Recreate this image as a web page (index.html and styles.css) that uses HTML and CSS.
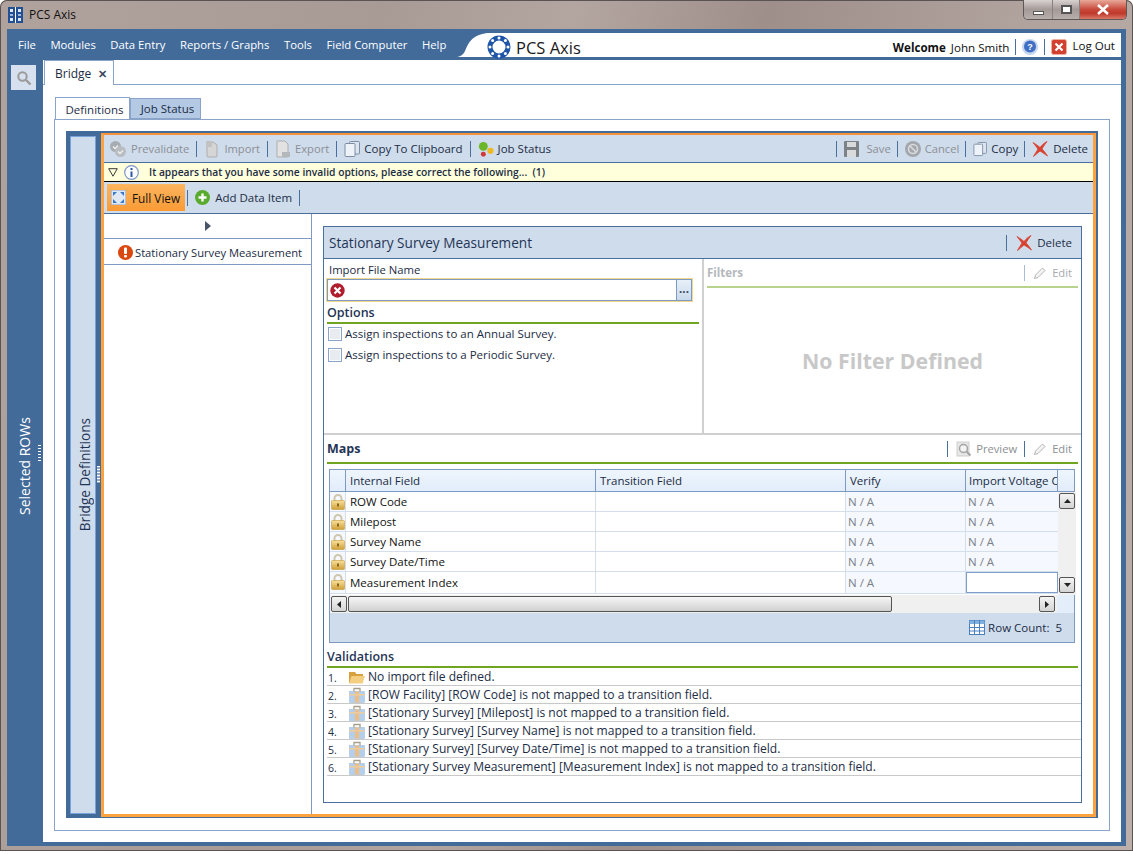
FILE: index.html
```html
<!DOCTYPE html>
<html lang="en">
<head>
  <meta charset="UTF-8">
  <title>PCS Axis</title>
  <link rel="stylesheet" href="styles.css">
</head>
<body>
  <!-- shared icons -->
  <svg class="defs" width="0" height="0">
    <defs>
      <linearGradient id="goldGrad" x1="0" y1="0" x2="0" y2="1"><stop offset="0" stop-color="#f8e09a"/><stop offset="1" stop-color="#d0a038"/></linearGradient>
      <symbol id="lock" viewBox="0 0 14 16">
        <path d="M3.500 7V4.500a3.500 3.500 0 0 1 7 0V7" fill="none" stroke="#cfc6ae" stroke-width="2"/>
        <rect x="0.500" y="6.500" width="13" height="9" rx="1" fill="url(#goldGrad)" stroke="#c49a3a" stroke-width=".6"/>
        <rect x="6" y="9.500" width="2" height="3" fill="#8a6a1e"/>
      </symbol>
      <symbol id="box" viewBox="0 0 16 16">
        <rect x="0.500" y="4.500" width="15" height="11" fill="#b4cfec" stroke="#a4c0de" stroke-width=".6"/>
        <rect x="6" y="4.500" width="4" height="11" fill="#eebd84"/>
        <rect x="0.500" y="7" width="15" height="1.500" fill="#f1cb9a"/>
        <path d="M5 4.500V1.500h6v3" fill="none" stroke="#a89e8c" stroke-width="1.300"/>
      </symbol>
      <symbol id="copy" viewBox="0 0 16 16">
        <rect x="5.500" y="0.500" width="10" height="12.500" rx="1" fill="#dbe4ef" stroke="#7d8ea3"/>
        <rect x="1" y="2.500" width="10" height="13" rx="1" fill="#eef3f9" stroke="#7d8ea3"/>
      </symbol>
      <symbol id="redx" viewBox="0 0 16 16">
        <path d="M1 1.500C5 4 7 5.500 8 6.500 10 4 12 2 15 .5 12.500 4 11 6 10 8c2 2 4 4.500 5.500 7C12.500 13 10 11 8 10c-2 1.500-4 3.500-6.500 5.500C3 12.500 5 10 6 8 4.500 6 3 4 1 1.500z" fill="#d8412f" stroke="#d8412f" stroke-width=".8"/>
      </symbol>
      <symbol id="pencil" viewBox="0 0 14 14">
        <path d="M1.500 12.500l1-3.500 7-7 2.500 2.500-7 7z" fill="#f4f4f4" stroke="#b4b4b4"/>
      </symbol>
    </defs>
  </svg>

  <div class="window">
    <!-- title bar -->
    <div class="titlebar">
      <svg class="app-icon" width="15" height="16" viewBox="0 0 15 16">
        <rect width="15" height="16" fill="#234f94"/>
        <rect x="7" width="1" height="16" fill="#fff"/>
        <rect x="2" y="2" width="3" height="3" fill="#dfe8f5"/>
        <rect x="10" y="2" width="3" height="3" fill="#dfe8f5"/>
        <rect x="2" y="7" width="3" height="2" fill="#9fb8dc"/>
        <rect x="10" y="7" width="3" height="2" fill="#9fb8dc"/>
        <rect x="2" y="11" width="3" height="3" fill="#dfe8f5"/>
        <rect x="10" y="11" width="3" height="3" fill="#dfe8f5"/>
      </svg>
      <span class="window-title">PCS Axis</span>
      <div class="win-controls">
        <div class="win-btn win-min"><span></span></div>
        <div class="win-btn win-max"><span></span></div>
        <div class="win-btn win-close">
          <svg width="14" height="11" viewBox="0 0 14 11"><path d="M2 1l10 9M12 1L2 10" stroke="#fff" stroke-width="2.600"/></svg>
        </div>
      </div>
    </div>

    <div class="app">
      <!-- menu and welcome line -->
      <header class="app-header">
        <nav class="menu">
          <a>File</a><a>Modules</a><a>Data Entry</a><a>Reports / Graphs</a><a>Tools</a><a>Field Computer</a><a>Help</a>
        </nav>
        <svg class="menu-curve" width="32" height="24" viewBox="0 0 32 24"><path d="M0 0h32C18 2 14 8 10 18 8 22 5 24 0 24z" fill="#426b9a"/></svg>
        <div class="brand">
          <svg width="24" height="24" viewBox="0 0 24 24">
            <circle cx="12" cy="12" r="9" fill="none" stroke="#1f55a8" stroke-width="5"/>
            <g fill="#fff">
              <circle cx="12" cy="3" r="1.500"/><circle cx="12" cy="21" r="1.500"/><circle cx="3" cy="12" r="1.500"/><circle cx="21" cy="12" r="1.500"/>
              <circle cx="5.600" cy="5.600" r="1.500"/><circle cx="18.400" cy="5.600" r="1.500"/><circle cx="5.600" cy="18.400" r="1.500"/><circle cx="18.400" cy="18.400" r="1.500"/>
            </g>
          </svg>
          <span>PCS Axis</span>
        </div>
        <div class="user">
          <b>Welcome</b><span class="user-name">John Smith</span><i class="sep"></i>
          <svg width="16" height="16" viewBox="0 0 16 16"><circle cx="8" cy="8" r="8" fill="#c5d6ee"/><circle cx="8" cy="7.500" r="6" fill="#3f6fc4"/><text x="8" y="11" font-size="9" font-weight="700" text-anchor="middle" fill="#fff" font-family="Liberation Sans">?</text></svg>
          <i class="sep"></i>
          <svg width="16" height="16" viewBox="0 0 16 16"><rect x=".5" y=".5" width="15" height="15" rx="2" fill="#d2402f" stroke="#f0b0a0"/><path d="M4.500 4.500l7 7M11.500 4.500l-7 7" stroke="#fff" stroke-width="2.200"/></svg>
          <span class="logout">Log Out</span>
        </div>
      </header>

      <div class="body">
        <!-- selected ROWs side bar -->
        <aside class="sidebar">
          <div class="search-btn">
            <svg width="16" height="16" viewBox="0 0 16 16"><circle cx="6.500" cy="6.500" r="4.200" fill="none" stroke="#9a9a9a" stroke-width="2"/><path d="M10 10l4.500 4.500" stroke="#9a9a9a" stroke-width="2.400"/></svg>
          </div>
          <div class="sidebar-label"><span>Selected ROWs</span></div>
          <i class="grip"></i>
        </aside>

        <main class="content">
          <div class="doc-tabs">
            <div class="doc-tab">Bridge<span class="doc-close">&#10005;</span></div>
          </div>

          <div class="tab-page">
            <div class="sub-tabs">
              <div class="sub-tab active">Definitions</div>
              <div class="sub-tab">Job Status</div>
            </div>

            <div class="sub-page">
              <div class="outer">
                <div class="strip"><span>Bridge Definitions</span><i class="grip dark"></i></div>

                <div class="pane">
                  <!-- main toolbar -->
                  <div class="toolbar">
                    <div class="tool off">
                      <svg width="18" height="18" viewBox="0 0 18 18"><circle cx="6.500" cy="6.500" r="5.500" fill="#a8adb3"/><circle cx="11.500" cy="11.500" r="5.500" fill="#b9bdc2"/><path d="M4 6.500l2 2 3-3M9 11.500l2 2 3-3" fill="none" stroke="#eee" stroke-width="1.400"/></svg>
                      Prevalidate
                    </div>
                    <i class="sep"></i>
                    <div class="tool off">
                      <svg width="16" height="18" viewBox="0 0 16 18"><path d="M3 2h6l4 3v11a1 1 0 0 1-1 1H4a1 1 0 0 1-1-1z" fill="#d6d6d6" stroke="#adadad"/><path d="M2 1l6 0 0 6-6 0z" fill="#c2c2c2"/></svg>
                      Import
                    </div>
                    <i class="sep"></i>
                    <div class="tool off">
                      <svg width="16" height="18" viewBox="0 0 16 18"><path d="M2 1h8l3 3v13H2z" fill="#e2e2e2" stroke="#adadad"/><path d="M7 12h8v5H7z" fill="#b4b8bd"/></svg>
                      Export
                    </div>
                    <i class="sep"></i>
                    <div class="tool">
                      <svg width="16" height="16"><use href="#copy"/></svg>
                      Copy To Clipboard
                    </div>
                    <i class="sep"></i>
                    <div class="tool">
                      <svg width="16" height="18" viewBox="0 0 18 18"><circle cx="6" cy="6" r="5" fill="#6cb62a"/><circle cx="14" cy="11" r="3.500" fill="#f0b820"/><circle cx="6" cy="15" r="2.800" fill="#d23a3a"/></svg>
                      Job Status
                    </div>
                    <div class="spacer"></div>
                    <i class="sep"></i>
                    <div class="tool off save">
                      <svg width="15" height="16" viewBox="0 0 15 16"><rect width="15" height="16" rx="1" fill="#7d8288"/><rect x="3" y="1" width="9" height="5" fill="#d8dadc"/><rect x="3" y="9" width="9" height="7" fill="#d8dadc"/></svg>
                      Save
                    </div>
                    <i class="sep"></i>
                    <div class="tool off">
                      <svg width="16" height="16" viewBox="0 0 16 16"><circle cx="8" cy="8" r="8" fill="#a2a7ad"/><circle cx="8" cy="8" r="4.500" fill="none" stroke="#d8dadc" stroke-width="1.600"/><path d="M5 5l6 6" stroke="#d8dadc" stroke-width="1.600"/></svg>
                      Cancel
                    </div>
                    <i class="sep"></i>
                    <div class="tool">
                      <svg width="14" height="16"><use href="#copy"/></svg>
                      Copy
                    </div>
                    <i class="sep"></i>
                    <div class="tool">
                      <svg width="16" height="16"><use href="#redx"/></svg>
                      <span class="tool-gap">Delete</span>
                    </div>
                  </div>

                  <!-- invalid options message -->
                  <div class="alert">
                    <svg width="10" height="9" viewBox="0 0 10 9"><path d="M.7.700h8.600L5 8.200z" fill="none" stroke="#3a3a3a"/></svg>
                    <svg width="15" height="15" viewBox="0 0 15 15"><circle cx="7.500" cy="7.500" r="6.800" fill="#fff" stroke="#7c96c8" stroke-width="1.200"/><rect x="6.500" y="6.500" width="2" height="5.500" fill="#2c58a8"/><rect x="6.500" y="3" width="2" height="2" fill="#2c58a8"/></svg>
                    <span>It appears that you have some invalid options, please correct the following...&nbsp; (1)</span>
                  </div>

                  <div class="view-bar">
                    <div class="full-view">
                      <svg width="15" height="15" viewBox="0 0 15 15"><rect width="15" height="15" fill="#dfe8f3" stroke="#8aa3c8"/><path d="M2 2l4 0-4 4zM13 2l0 4-4-4zM2 13l0-4 4 4zM13 13l-4 0 4-4z" fill="#3a79c8"/></svg>
                      Full View
                    </div>
                    <i class="sep"></i>
                    <div class="tool">
                      <svg width="15" height="15" viewBox="0 0 15 15"><circle cx="7.500" cy="7.500" r="7.500" fill="#58ab2c"/><path d="M7.500 3.500v8M3.500 7.500h8" stroke="#fff" stroke-width="2.400"/></svg>
                      <span class="tool-gap">Add Data Item</span>
                    </div>
                    <i class="sep"></i>
                  </div>

                  <div class="work">
                    <!-- data item list -->
                    <div class="item-list">
                      <div class="collapse-row"><svg width="6" height="10" viewBox="0 0 6 10"><path d="M0 0l6 5-6 5z" fill="#4a5468"/></svg></div>
                      <div class="item-row">
                        <svg width="15" height="15" viewBox="0 0 15 15"><circle cx="7.500" cy="7.500" r="7.500" fill="#d9480f"/><rect x="6" y="2.500" width="3" height="6.500" rx="1" fill="#fff"/><rect x="6" y="10" width="3" height="2.500" rx="1" fill="#fff"/></svg>
                        Stationary Survey Measurement
                      </div>
                    </div>

                    <div class="detail">
                      <section class="panel">
                        <div class="panel-head">
                          <span class="panel-title">Stationary Survey Measurement</span>
                          <i class="sep"></i>
                          <div class="tool">
                            <svg width="16" height="16"><use href="#redx"/></svg>
                            <span class="tool-gap">Delete</span>
                          </div>
                        </div>

                        <div class="panel-top">
                          <div class="import-col">
                            <div class="field-label">Import File Name</div>
                            <div class="file-input">
                              <svg width="15" height="15" viewBox="0 0 15 15"><circle cx="7.500" cy="7.500" r="7.200" fill="#b01e2e"/><path d="M4.500 4.500l6 6M10.500 4.500l-6 6" stroke="#fff" stroke-width="2.200"/></svg>
                              <span class="file-btn">...</span>
                            </div>
                            <h3 class="section-title">Options</h3>
                            <label class="check"><i class="box"></i>Assign inspections to an Annual Survey.</label>
                            <label class="check"><i class="box"></i>Assign inspections to a Periodic Survey.</label>
                          </div>
                          <div class="filter-col">
                            <div class="filter-head">
                              <span>Filters</span>
                              <div class="spacer"></div>
                              <i class="sep light"></i>
                              <div class="tool off">
                                <svg width="14" height="14"><use href="#pencil"/></svg>
                                Edit
                              </div>
                            </div>
                            <div class="no-filter">No Filter Defined</div>
                          </div>
                        </div>

                        <div class="maps-head">
                          <span>Maps</span>
                          <div class="spacer"></div>
                          <i class="sep"></i>
                          <div class="tool off">
                            <svg width="16" height="16" viewBox="0 0 16 16"><rect x="1" y="1" width="12" height="14" fill="#e6e6e6" stroke="#cfcfcf"/><circle cx="7.500" cy="7.500" r="4" fill="#f4f4f4" stroke="#a4a4a4" stroke-width="1.500"/><path d="M10.500 10.500l4 4" stroke="#a4a4a4" stroke-width="2"/></svg>
                            Preview
                          </div>
                          <i class="sep"></i>
                          <div class="tool off">
                            <svg width="14" height="14"><use href="#pencil"/></svg>
                            Edit
                          </div>
                        </div>

                        <!-- maps grid -->
                        <div class="grid">
                          <div class="grid-head">
                            <div></div><div>Internal Field</div><div>Transition Field</div><div>Verify</div><div class="clip">Import Voltage C</div><div></div>
                          </div>
                          <div class="grid-body">
                            <div class="rows">
                              <div class="row"><div class="lock"><svg width="14" height="16"><use href="#lock"/></svg></div><div>ROW Code</div><div></div><div class="na">N / A</div><div class="na">N / A</div></div>
                              <div class="row"><div class="lock"><svg width="14" height="16"><use href="#lock"/></svg></div><div>Milepost</div><div></div><div class="na">N / A</div><div class="na">N / A</div></div>
                              <div class="row"><div class="lock"><svg width="14" height="16"><use href="#lock"/></svg></div><div>Survey Name</div><div></div><div class="na">N / A</div><div class="na">N / A</div></div>
                              <div class="row"><div class="lock"><svg width="14" height="16"><use href="#lock"/></svg></div><div>Survey Date/Time</div><div></div><div class="na">N / A</div><div class="na">N / A</div></div>
                              <div class="row last"><div class="lock"><svg width="14" height="16"><use href="#lock"/></svg></div><div>Measurement Index</div><div></div><div class="na">N / A</div><div class="editing"></div></div>
                            </div>
                            <div class="vscroll">
                              <div class="sb-btn"><svg width="7" height="4" viewBox="0 0 7 4"><path d="M0 4l3.500-4 3.500 4z" fill="#222"/></svg></div>
                              <div class="sb-btn"><svg width="7" height="4" viewBox="0 0 7 4"><path d="M0 0l3.500 4 3.500-4z" fill="#222"/></svg></div>
                            </div>
                          </div>
                          <div class="hscroll">
                            <div class="sb-btn"><svg width="4" height="7" viewBox="0 0 4 7"><path d="M4 0L0 3.500 4 7z" fill="#222"/></svg></div>
                            <div class="sb-thumb"></div>
                            <div class="spacer"></div>
                            <div class="sb-btn"><svg width="4" height="7" viewBox="0 0 4 7"><path d="M0 0l4 3.500L0 7z" fill="#222"/></svg></div>
                          </div>
                          <div class="grid-foot">
                            <svg width="16" height="15" viewBox="0 0 16 15"><rect x=".5" y=".5" width="15" height="14" fill="#fff" stroke="#4a7fc0"/><rect x=".5" y=".5" width="15" height="3.500" fill="#7fb0e0"/><path d="M5.500 0v15M10.500 0v15M0 7.500h16M0 11h16" stroke="#4a7fc0"/></svg>
                            <span>Row Count:</span><span class="count">5</span>
                          </div>
                        </div>

                        <h3 class="section-title valid-title">Validations</h3>
                        <ol class="valid-list">
                          <li><span class="num">1.</span><svg width="16" height="14" viewBox="0 0 16 14"><path d="M0 2h6l1.500 2H14v9H0z" fill="#d9a03e"/><path d="M2.500 6H16l-2.500 7.500H0z" fill="#f4cf82"/></svg>No import file defined.</li>
                          <li><span class="num">2.</span><svg width="16" height="16"><use href="#box"/></svg>[ROW Facility] [ROW Code] is not mapped to a transition field.</li>
                          <li><span class="num">3.</span><svg width="16" height="16"><use href="#box"/></svg>[Stationary Survey] [Milepost] is not mapped to a transition field.</li>
                          <li><span class="num">4.</span><svg width="16" height="16"><use href="#box"/></svg>[Stationary Survey] [Survey Name] is not mapped to a transition field.</li>
                          <li><span class="num">5.</span><svg width="16" height="16"><use href="#box"/></svg>[Stationary Survey] [Survey Date/Time] is not mapped to a transition field.</li>
                          <li><span class="num">6.</span><svg width="16" height="16"><use href="#box"/></svg>[Stationary Survey Measurement] [Measurement Index] is not mapped to a transition field.</li>
                        </ol>
                      </section>
                    </div>
                  </div>
                </div>
              </div>
            </div>
          </div>
        </main>
      </div>
    </div>
  </div>
</body>
</html>
```

FILE: styles.css
```css
* {
  box-sizing: border-box;
}

body {
  margin: 0;
  width: 1133px;
  height: 854px;
  overflow: hidden;
  background: #fff;
  font-family: "Open Sans", "Noto Sans", sans-serif;
  font-size: 11.5px;
  color: #1c2c44;
}

.defs {
  display: block;
  height: 0;
}

svg {
  flex: none;
  display: block;
}

.spacer {
  flex: 1;
}

/* window frame */
.window {
  height: 851px;
  padding: 0 7px 5px 7px;
  display: flex;
  flex-direction: column;
  background: linear-gradient(100deg, #b0a29c 0%, #a89a95 30%, #b3a5a0 45%, #9e8f8a 60%, #b0a29d 80%, #bdb0ab 100%);
  border-radius: 7px 7px 0 0;
  box-shadow: inset 0 0 0 1px #5a5352;
}

.titlebar {
  height: 29px;
  flex: none;
  display: flex;
  align-items: flex-start;
  padding-top: 7px;
}

.app-icon {
  margin: 0 6px 0 1px;
}

.window-title {
  font-size: 12px;
  color: #111;
  line-height: 16px;
}

.win-controls {
  display: flex;
  margin-left: auto;
  margin-top: -7px;
  margin-right: -1px;
  height: 20px;
  border: 1px solid #5f5857;
  border-top: 0;
  border-radius: 0 0 5px 5px;
  overflow: hidden;
}

.win-btn {
  display: flex;
  align-items: center;
  justify-content: center;
  height: 100%;
  background: linear-gradient(#d8d2d0, #a49a97 50%, #b7afac);
  border-right: 1px solid #8b8280;
}

.win-min {
  width: 29px;
}

.win-min span {
  width: 11px;
  height: 4px;
  margin-top: 6px;
  background: #fff;
  border: 1px solid #555;
}

.win-max {
  width: 27px;
}

.win-max span {
  width: 11px;
  height: 9px;
  background: #fff;
  border: 2px solid #555;
  box-shadow: inset 0 0 0 1px #fff;
}

.win-close {
  width: 46px;
  border: 0;
  background: linear-gradient(#e8a99a, #c8493a 50%, #c0392b 70%, #d87868);
}

/* app chrome */
.app {
  flex: 1;
  display: flex;
  flex-direction: column;
  padding: 4px 5px 4px 4px;
  background: #426b9a;
}

.app-header {
  height: 24px;
  flex: none;
  display: flex;
  background: #fff;
  margin-bottom: 3px;
}

.menu {
  display: flex;
  align-items: center;
  gap: 14.5px;
  width: 448px;
  height: 24px;
  padding: 0 0 2px 11px;
  margin-left: -4px;
  background: #426b9a;
  color: #fff;
  font-size: 11.3px;
  white-space: nowrap;
}

.brand {
  display: flex;
  align-items: center;
  gap: 5px;
  font-size: 16.5px;
  color: #1a1a1a;
  margin-top: 2px;
  height: 24px;
}

.user {
  margin-left: auto;
  padding-right: 6px;
  display: flex;
  align-items: center;
  font-size: 11.6px;
  color: #111;
  height: 28px;
}

.user b {
  font-weight: 700;
}

.user-name {
  margin-left: 5px;
}

.user .sep {
  margin: 0 6px;
}

.logout {
  margin-left: 5px;
  margin-top: -4px;
}

.sep {
  width: 1px;
  height: 16px;
  flex: none;
  background: #4a6f9e;
}

.sep.light {
  background: #a9bcd6;
}

.body {
  flex: 1;
  display: flex;
  min-height: 0;
}

/* selected ROWs bar */
.sidebar {
  width: 32px;
  flex: none;
  display: flex;
  flex-direction: column;
  position: relative;
  background: #426b9a;
}

.search-btn {
  width: 25px;
  height: 25px;
  margin-top: 5px;
  background: #d6e0ee;
  display: flex;
  align-items: center;
  justify-content: center;
}

.sidebar-label {
  flex: 1;
  display: flex;
  align-items: center;
  justify-content: center;
  writing-mode: vertical-rl;
  transform: rotate(180deg);
  color: #fff;
  font-size: 14px;
  margin-left: 2px;
  margin-right: 8px;
}

.grip {
  display: block;
  width: 3px;
  height: 17px;
  position: absolute;
  left: 27px;
  top: 385px;
  background: repeating-linear-gradient(#fff 0 1px, transparent 1px 3px);
}

.grip.dark {
  background: repeating-linear-gradient(#fff 0 1px, #8fa8c8 1px 3px);
  left: 26px;
  top: 329px;
}

/* document tabs */
.content {
  flex: 1;
  display: flex;
  flex-direction: column;
  min-width: 0;
  background: #fff;
}

.doc-tabs {
  height: 25px;
  flex: none;
  display: flex;
  padding-left: 1px;
  border-bottom: 1px solid #8aa3c8;
}

.doc-tab {
  width: 70px;
  height: 25px;
  display: flex;
  align-items: center;
  padding-left: 10px;
  background: #fff;
  border: 1px solid #8aa3c8;
  border-bottom: 0;
  font-size: 12px;
}

.doc-close {
  margin-left: 7px;
  font-size: 11px;
  color: #3a4a60;
  font-weight: 700;
}

.tab-page {
  flex: 1;
  display: flex;
  flex-direction: column;
  padding: 12px 11px 11px 11px;
  min-height: 0;
}

.sub-tabs {
  display: flex;
  align-items: flex-end;
  height: 22px;
  flex: none;
  padding-left: 1px;
}

.sub-tab {
  width: 71px;
  height: 21px;
  display: flex;
  align-items: center;
  justify-content: center;
  padding-left: 4px;
  background: #b4cae4;
  border: 1px solid #8aa3c8;
  font-size: 11.5px;
}

.sub-tab.active {
  width: 75px;
  height: 23px;
  margin-bottom: -1px;
  background: #fff;
  border-bottom: 0;
}

.sub-page {
  flex: 1;
  display: flex;
  padding: 11px 11px 12px 11px;
  border: 1px solid #8aa3c8;
  min-height: 0;
}

.outer {
  flex: 1;
  display: flex;
  padding: 2px 2px 1px 4px;
  background: #426b9a;
  min-width: 0;
}

.strip {
  width: 26px;
  flex: none;
  margin: 3px 5px 3px 0;
  position: relative;
  display: flex;
  align-items: center;
  justify-content: center;
  background: #cfdcec;
  border: 1px solid #7ba2d8;
}

.strip span {
  writing-mode: vertical-rl;
  transform: rotate(180deg);
  font-size: 13.6px;
  color: #1f3555;
  margin-left: 2px;
}

/* orange highlighted pane */
.pane {
  flex: 1;
  min-width: 0;
  display: flex;
  flex-direction: column;
  background: #fff;
  border: 3px solid #fca33f;
  border-top: 2px solid #f7923a;
}

.toolbar {
  height: 28px;
  flex: none;
  display: flex;
  align-items: center;
  padding: 0 5px;
  background: #cfdcec;
  border-bottom: 1px solid #4a6f9e;
}

.toolbar .sep {
  margin: 0 7px;
}

.toolbar .spacer ~ .sep {
  margin: 0 7px 0 6px;
}

.tool {
  display: flex;
  align-items: center;
  gap: 4px;
  white-space: nowrap;
  font-size: 11.5px;
  font-weight: 400;
  color: #1c2c44;
}

.tool.off {
  font-size: 11.2px;
  color: #8c8f94;
}

.tool.save svg {
  margin-right: 3px;
}

.tool-gap {
  margin-left: 1px;
}

.alert {
  height: 19px;
  flex: none;
  display: flex;
  align-items: center;
  gap: 6px;
  padding-left: 4px;
  background: #ffffdc;
  border-bottom: 1px solid #000;
  font-size: 10.3px;
  font-weight: 600;
  color: #1c2c44;
}

.alert span {
  margin-left: 4px;
}

.view-bar {
  height: 32px;
  flex: none;
  display: flex;
  align-items: center;
  padding-left: 3px;
  background: #cfdcec;
  border-bottom: 1px solid #4a6f9e;
}

.view-bar .sep {
  margin: 0 7px 0 2px;
}

.view-bar .tool + .sep {
  margin-left: 7px;
}

.full-view {
  display: flex;
  align-items: center;
  gap: 6px;
  height: 27px;
  padding: 0 5px 0 4px;
  background: linear-gradient(#fdb55e, #fb9a35);
  color: #111;
  font-size: 11.8px;
  white-space: nowrap;
}

.work {
  flex: 1;
  display: flex;
  min-height: 0;
}

.item-list {
  width: 208px;
  flex: none;
  border-right: 1px solid #7f9ac0;
}

.collapse-row {
  height: 25px;
  display: flex;
  align-items: center;
  justify-content: center;
  border-bottom: 1px solid #7f9ac0;
}

.item-row {
  height: 26px;
  display: flex;
  align-items: center;
  gap: 2px;
  padding: 1px 0 0 14px;
  border-bottom: 1px solid #7f9ac0;
  font-size: 11.2px;
  white-space: nowrap;
}

.detail {
  flex: 1;
  display: flex;
  padding: 12px 11px 11px 11px;
  min-width: 0;
}

/* stationary survey panel */
.panel {
  flex: 1;
  display: flex;
  flex-direction: column;
  border: 1px solid #4a6f9e;
  min-width: 0;
}

.panel-head {
  height: 32px;
  flex: none;
  display: flex;
  align-items: center;
  padding: 0 9px 0 5px;
  background: #cfdcec;
  border-bottom: 1px solid #4a6f9e;
}

.panel-head .sep {
  margin-right: 9px;
}

.panel-title {
  flex: 1;
  font-size: 13.6px;
  color: #1f3555;
}

.panel-top {
  height: 176px;
  flex: none;
  display: flex;
  border-bottom: 2px solid #d0d0d0;
}

.import-col {
  width: 380px;
  flex: none;
  padding: 2px 3px 0 3px;
  border-right: 2px solid #d0d0d0;
}

.field-label {
  height: 18px;
  line-height: 17px;
  padding-left: 2px;
  font-size: 11.3px;
}

.file-input {
  width: 365px;
  height: 22px;
  display: flex;
  align-items: center;
  justify-content: space-between;
  padding-left: 2px;
  background: #fff;
  border: 1px solid #7f9ac0;
  outline: 1px solid #f0d78c;
}

.file-btn {
  width: 15px;
  height: 20px;
  display: flex;
  justify-content: center;
  line-height: 18px;
  background: linear-gradient(#e8f0f9, #c9d9ec);
  border-left: 1px solid #7f9ac0;
  font-weight: 700;
  color: #3a4a60;
}

.section-title {
  margin: 3px 0 0 0;
  height: 20px;
  line-height: 18px;
  font-size: 12.5px;
  font-weight: 600;
  color: #1f3555;
  border-bottom: 2px solid #6fa51f;
}

.check {
  display: flex;
  align-items: center;
  gap: 3px;
  height: 21px;
  padding-left: 1px;
}

.section-title + .check {
  height: 19px;
  margin-bottom: 1px;
}

.box {
  width: 14px;
  height: 14px;
  background: #e8ecf1;
  border: 1px solid #8aa3c8;
  box-shadow: inset 0 0 0 1px #fff;
}

.filter-col {
  flex: 1;
  display: flex;
  flex-direction: column;
  padding: 0 3px;
}

.filter-head {
  height: 29px;
  flex: none;
  display: flex;
  align-items: center;
  padding: 0 6px 0 0;
  border-bottom: 2px solid #b8d48c;
  color: #b4b8bd;
  font-weight: 700;
}

.filter-head .sep {
  margin-right: 8px;
}

.filter-head .tool,
.maps-head .tool:last-child {
  gap: 5px;
}

.filter-head .tool.off {
  color: #a8abb0;
}

.no-filter {
  flex: 1;
  display: flex;
  align-items: center;
  justify-content: center;
  font-size: 21.3px;
  font-weight: 700;
  color: #c8c8c8;
}

.maps-head {
  height: 29px;
  flex: none;
  display: flex;
  align-items: center;
  margin: 0 3px;
  padding: 0 6px 0 0;
  border-bottom: 2px solid #6fa51f;
  font-size: 12.5px;
  font-weight: 700;
  color: #1f3555;
}

.maps-head .sep {
  margin: 0 8px 0 7px;
}

/* maps grid */
.grid {
  flex: none;
  margin: 5px 6px 0 5px;
  border: 1px solid #7f9ac0;
  background: #cfdcec;
}

.grid-head,
.row {
  display: grid;
  grid-template-columns: 16px 250px 250px 120px 92px;
}

.grid-head {
  grid-template-columns: 16px 250px 250px 120px 92px 1fr;
  height: 22px;
  background: linear-gradient(#eef5fd, #e2edfa);
  border-bottom: 1px solid #7f9ac0;
}

.grid-head div {
  display: flex;
  align-items: center;
  padding-left: 4px;
  border-right: 1px solid #7f9ac0;
  overflow: hidden;
  white-space: nowrap;
}

.grid-head div:last-child {
  border-right: 0;
}

.grid-head .clip {
  padding-left: 3px;
}

.grid-body {
  display: flex;
  height: 103px;
}

.rows {
  width: 728px;
  flex: none;
  background: #fff;
}

.row {
  height: 20px;
  border-bottom: 1px solid #d5dfec;
  color: #111;
}

.row.last {
  height: 22px;
}

.row div {
  display: flex;
  align-items: center;
  padding-left: 4px;
  border-right: 1px solid #d5dfec;
}

.row.last div {
  padding-bottom: 1px;
}

.row div.lock {
  padding-left: 1px;
  background: #f5f8fe;
}

.row div.na {
  padding-left: 2px;
  background: #f5f8fe;
  color: #7c8087;
}

.row div:last-child {
  border-right: 0;
}

.row div.editing {
  background: #fff;
  border: 1px solid #7f9fc9;
}

.vscroll {
  flex: 1;
  display: flex;
  flex-direction: column;
  justify-content: space-between;
  padding: 1px 1px 2px 1px;
  background: #f0f0f0;
}

.sb-btn {
  width: 16px;
  height: 16px;
  flex: none;
  display: flex;
  align-items: center;
  justify-content: center;
  background: linear-gradient(#f4f4f4, #d4d4d4);
  border: 1px solid #555;
  border-radius: 2px;
}

.hscroll {
  height: 18px;
  display: flex;
  align-items: center;
  padding: 0 19px 0 1px;
  background: linear-gradient(90deg, #f0f0f0 0 727px, #e3eefa 727px);
}

.sb-thumb {
  width: 544px;
  height: 16px;
  margin-left: 1px;
  background: linear-gradient(#f6f6f6, #d0d0d0);
  border: 1px solid #555;
  border-radius: 2px;
}

.grid-foot {
  height: 29px;
  display: flex;
  align-items: center;
  justify-content: flex-end;
  gap: 3px;
  padding-right: 12px;
}

.count {
  margin-left: 3px;
}

/* validations list */
.valid-title {
  margin: 3px 3px 0 3px;
  height: 22px;
  line-height: 22px;
}

.valid-list {
  list-style: none;
  margin: 0 0 0 3px;
  padding: 0;
}

.valid-list li {
  height: 18px;
  display: flex;
  align-items: center;
  gap: 3px;
  padding-left: 1px;
  border-bottom: 1px solid #c8c8c8;
  font-size: 12.05px;
  white-space: nowrap;
  color: #1c2c44;
}

.num {
  width: 18px;
  font-size: 10.5px;
  margin-top: 3px;
}
```
